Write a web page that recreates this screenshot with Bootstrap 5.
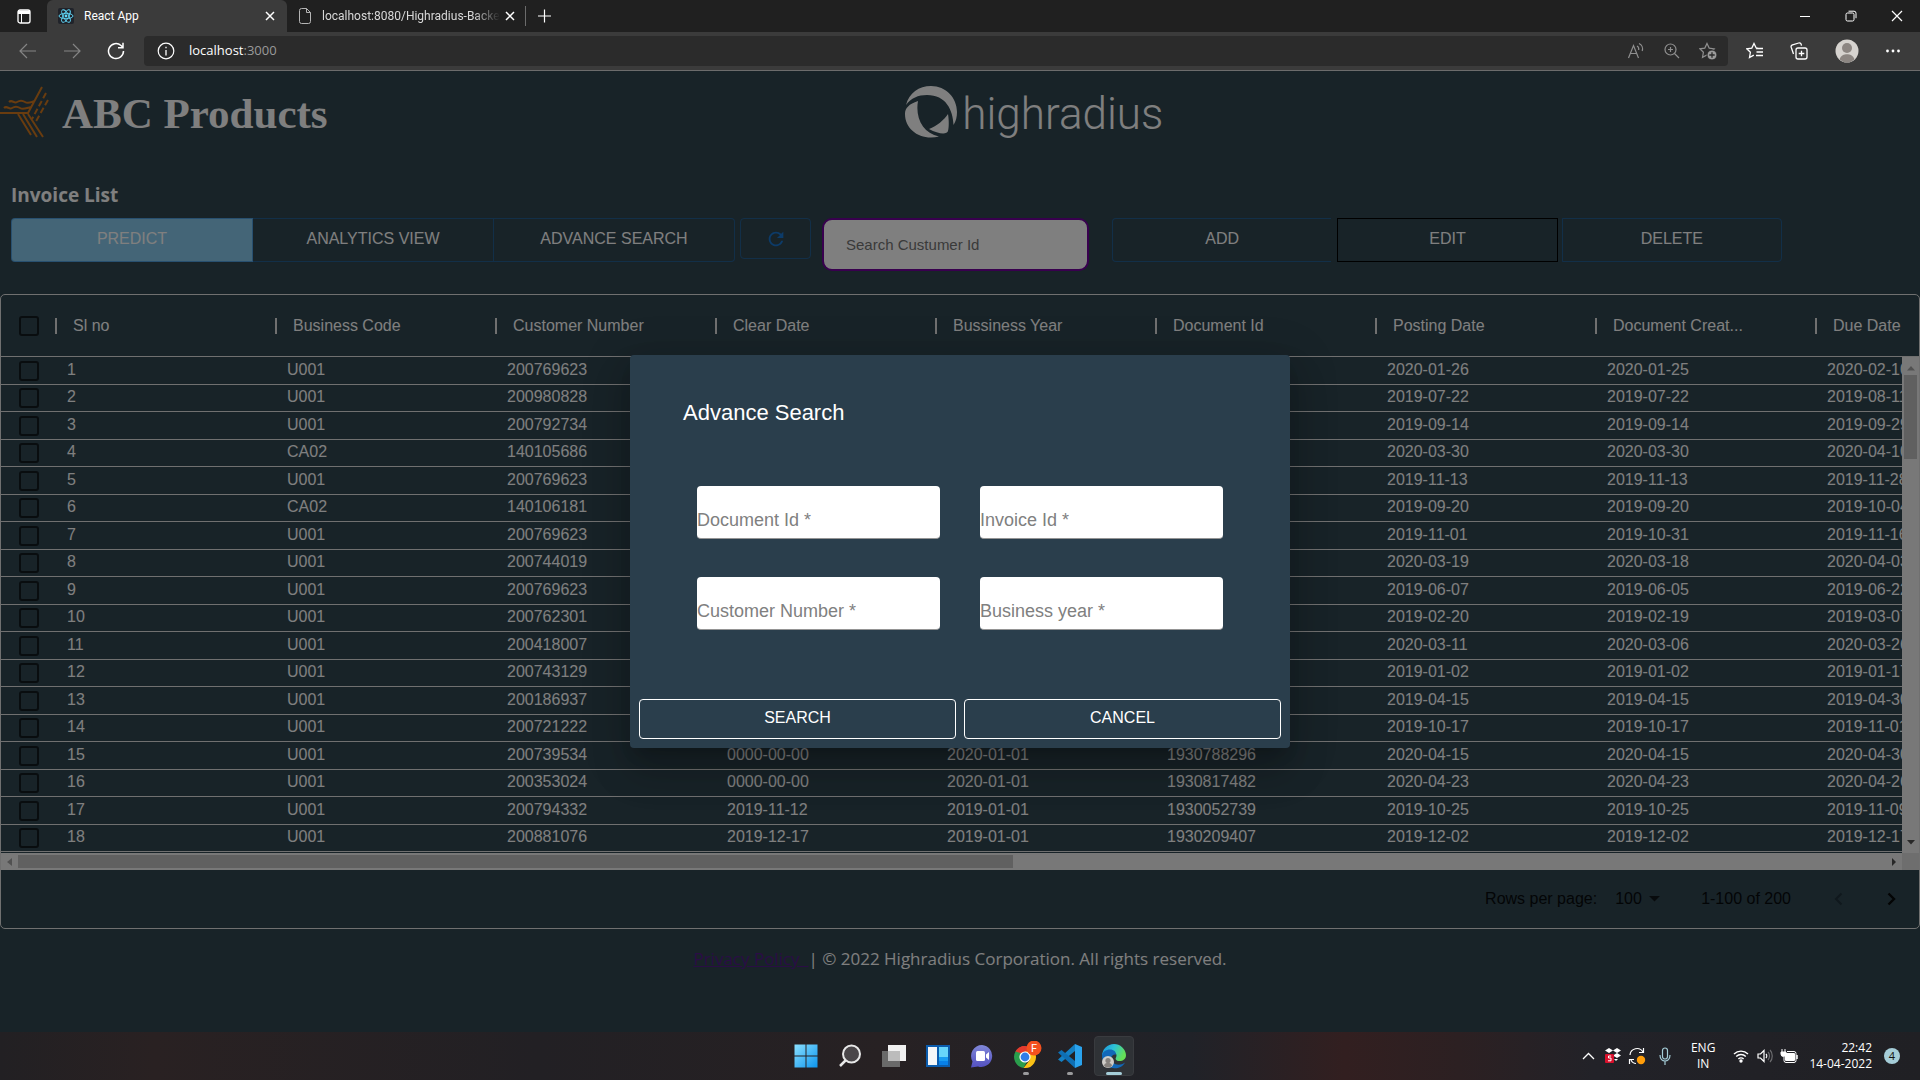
<!DOCTYPE html>
<html lang="en">
<head>
<meta charset="utf-8">
<meta name="viewport" content="width=device-width, initial-scale=1">
<title>React App</title>
<link href="https://cdn.jsdelivr.net/npm/bootstrap@5.3.0/dist/css/bootstrap.min.css" rel="stylesheet">
<style>
  :root { --page: #304650; --line: #e0e0e0; --ui: "Open Sans", "Noto Sans", sans-serif; --arial: "Liberation Sans", Arial, sans-serif; }
  body { height: 100vh; overflow: hidden; background: #202020; font-family: var(--ui); color: #fff; }
  svg { display: block; flex: none; }
  button { font-family: inherit; }
  .plain-btn { background: none; border: 0; padding: 0; color: inherit; display: flex; align-items: center; justify-content: center; }

  /* browser frame */
  .tab-strip { height: 32px; background: #202020; font: 12px/16px Roboto, sans-serif; }
  .tab-actions { width: 47px; padding-left: 1px; }
  .tab-item { height: 32px; }
  .tab-one { width: 240px; background: #3b3b3b; border-radius: 6px 6px 0 0; padding: 0 10px 0 11px; }
  .tab-two { width: 238px; padding: 0 8px 0 11px; }
  .tab-label { white-space: nowrap; margin-left: 10px; }
  .fade-label { -webkit-mask-image: linear-gradient(90deg, #000 85%, transparent); mask-image: linear-gradient(90deg, #000 85%, transparent); color: #d8d8d8; }
  .tab-rule { width: 1px; height: 20px; background: #6b6b6b; }
  .win-btn { width: 46px; height: 32px; }
  .nav-strip { height: 39px; background: #3b3b3b; border-bottom: 1px solid #6c6c6c; padding-bottom: 1px; }
  .nav-group { padding: 0 6px; }
  .nav-btn { width: 44px; height: 30px; }
  .address { height: 30px; background: #2b2b2b; border-radius: 4px; font-size: 13px; color: #9a9a9a; padding: 0 2px 0 13px; gap: 14px; }
  .side-btn { width: 46px; height: 30px; }
  .addr-btn { width: 36px; height: 30px; color: #8f8f8f; }

  /* page */
  .stage { background: var(--page); min-height: 0; }
  .brand-row { padding-top: 15px; height: 95px; }
  .brand-left { width: 47.15%; gap: 13px; }
  .brand-name { font: 700 43px/56px "Liberation Serif", "Times New Roman", serif; }
  .hr-name { font: 300 44px/56px Roboto, sans-serif; margin: 0; }
  .list-title { font: 700 19px/28px var(--ui); margin: 15px 0 9px 11px; }
  .tool-row { height: 76px; padding-left: 11px; padding-right: 138px; font-family: var(--arial); }
  .views { flex: 1 1 724px; margin-right: 5px; }
  .refresh-btn { flex: 1 1 71px; height: 41px; margin-right: 11px; color: #1976d2; border: 1px solid rgba(25,118,210,.5); border-radius: 4px; }
  .id-search { flex: 1 1 267px; min-width: 0; height: 53px; border: 2px solid #70009c; border-radius: 10px; background: #fff; padding: 0 22px; font-size: 15px; margin-right: 23px; }
  .id-search::placeholder { color: #757575; }
  .edits { flex: 1 1 670px; gap: 4px; }
  .tool-btn { flex: 1 1 0; height: 44px; border: 1px solid rgba(25,118,210,.5); background: none; color: #fff; font-size: 16px; line-height: 24px; padding: 0 0 2px; }
  .views .tool-btn + .tool-btn { border-left: 0; }
  .start-btn { border-radius: 4px 0 0 4px; }
  .end-btn { border-radius: 0 4px 4px 0; }
  .predict-btn { background: #88cbee; color: #fff; }
  .add-btn { border-right: 0; margin-right: 2px; }
  .edit-btn { border-color: #000; }

  /* data grid */
  .grid-box { border: 1px solid var(--line); border-radius: 5px; font-family: var(--arial); font-size: 16px; }
  .grid-view { height: 558px; overflow: hidden; }
  .grid-table { table-layout: fixed; width: 2035px; border-collapse: separate; border-spacing: 0; line-height: 20px; }
  .grid-table th { height: 62px; padding: 0 0 0 17px; font-weight: 400; border-bottom: 1px solid var(--line); position: relative; }
  .grid-table th + th::before { content: ""; position: absolute; left: -1px; top: 23px; width: 2px; height: 16px; background: var(--line); }
  .grid-table td { height: 27px; padding: 0 0 2px 11px; border-bottom: 1px solid var(--line); white-space: nowrap; }
  .grid-table tbody tr:nth-child(odd) td { height: 28px; }
  .grid-table .pick { width: 55px; padding: 0 0 0 18px; }
  .pick input { display: block; appearance: none; width: 20px; height: 20px; margin: 0; border: 2px solid #121a1e; border-radius: 3px; }
  .bar-y { position: absolute; right: 0; top: 62px; width: 17px; height: 496px; background: #f1f1f1; padding: 9px 2px 7px; }
  .bar-x { height: 17px; background: #f1f1f1; padding: 2px 0 2px 6px; }
  .thumb-y { width: 13px; height: 84px; background: #c1c1c1; margin-top: 4px; }
  .thumb-x { width: 52.5%; height: 13px; background: #c1c1c1; margin-left: 6px; }
  .bar-corner { width: 17px; height: 17px; background: #dcdcdc; }
  .pager { height: 58px; color: #070a0c; }
  .pager select { appearance: none; border: 0; background: none; color: inherit; font: inherit; padding: 0; width: 34px; margin-left: 18px; }
  .pager-btn { width: 54px; height: 40px; }
  .legal { font-size: 17px; line-height: 24px; margin-top: 18px; }
  .legal a { color: #551a8b; }

  /* dialog */
  .search-modal { --bs-modal-width: 660px; background: rgba(0,0,0,.5); font-family: var(--arial); z-index: 5; }
  .search-modal .modal-content { background: #2a3e4c; color: #fff; border: 0; border-radius: 4px; padding: 44px 9px 9px; box-shadow: 0 11px 15px -7px rgba(0,0,0,.2), 0 24px 38px 3px rgba(0,0,0,.14), 0 9px 46px 8px rgba(0,0,0,.12); }
  .modal-heading { font-size: 22px; line-height: 28px; font-weight: 400; margin: 0 0 59px 44px; }
  .field-grid { display: grid; grid-template-columns: 1fr 1fr; gap: 38px 40px; margin: 0 58px 69px; }
  .field-box { position: relative; height: 53px; }
  .field-box input { width: 100%; height: 53px; border: 0; border-bottom: 1px solid #949494; border-radius: 4px; background: #fff; padding: 20px 0 0; }
  .field-box label { position: absolute; left: 0; top: 22px; font-size: 18px; line-height: 24px; color: #808080; pointer-events: none; }
  .dialog-btn { flex: 1 1 0; height: 40px; border: 1px solid #fff; border-radius: 4px; background: none; color: #fff; font-size: 16px; line-height: 24px; padding: 0 0 3px; }

  /* taskbar */
  .task-row { height: 48px; background: linear-gradient(90deg, #222023 0, #292122 8%, #222024 28%, #272123 46%, #202228 62%, #321f20 70%, #2c2022 76%, #222228 83%, #202024 100%); font-size: 12px; line-height: 16px; }
  .task-side { flex: 1 1 0; padding-right: 16px; margin-right: 4px; }
  .task-btn { width: 44px; height: 48px; position: relative; }
  .task-btn.running::after { content: ""; position: absolute; bottom: 5px; width: 6px; height: 3px; border-radius: 2px; background: #9a9a9c; }
  .task-btn.current::before { content: ""; position: absolute; inset: 4px 2px; border-radius: 4px; background: #2f3236; border: 1px solid #393b3f; }
  .task-btn.current::after { width: 16px; background: #a5cdd8; }
  .task-btn svg { position: relative; }
  .note-count { width: 16px; height: 16px; border-radius: 50%; background: #a5cdd8; color: #111; font-size: 11px; }
  .tray-btn { width: 24px; height: 48px; }
  .input-lang { margin: 0 14px; }
</style>
</head>
<body class="d-flex flex-column">

<header>
  <div class="tab-strip d-flex align-items-center">
    <button class="plain-btn tab-actions" aria-label="Tab actions"><svg width="16" height="16" viewBox="0 0 16 16"><rect x="2" y="2" width="12" height="13" rx="2" fill="none" stroke="#fff" stroke-width="1.3"/><path d="M2 2.500h12v3.500H2z" fill="#fff"/><path d="M5.500 6v9" stroke="#fff"/></svg></button>
    <div class="tab-item tab-one d-flex align-items-center">
      <svg width="16" height="16" viewBox="0 0 16 16"><rect width="16" height="16" rx="2" fill="#20232a"/><g fill="none" stroke="#61dafb" stroke-width=".9"><ellipse cx="8" cy="8" rx="7" ry="2.7"/><ellipse cx="8" cy="8" rx="7" ry="2.7" transform="rotate(60 8 8)"/><ellipse cx="8" cy="8" rx="7" ry="2.7" transform="rotate(120 8 8)"/></g><circle cx="8" cy="8" r="1.4" fill="#61dafb"/></svg>
      <span class="tab-label flex-grow-1">React App</span>
      <button class="plain-btn" aria-label="Close tab"><svg width="14" height="14" viewBox="0 0 14 14"><path d="M3 3l8 8M11 3l-8 8" stroke="#fff" stroke-width="1.5"/></svg></button>
    </div>
    <div class="tab-item tab-two d-flex align-items-center">
      <svg width="14" height="16" viewBox="0 0 14 16"><path d="M1.5 2.500a2 2 0 0 1 2-2h5l4 4v9a2 2 0 0 1-2 2h-7a2 2 0 0 1-2-2zM8.500.5v4h4" fill="none" stroke="#b5b5b5"/></svg>
      <span class="tab-label fade-label">localhost:8080/Highradius-Backe</span>
      <button class="plain-btn ms-auto" aria-label="Close tab"><svg width="14" height="14" viewBox="0 0 14 14"><path d="M3 3l8 8M11 3l-8 8" stroke="#fff" stroke-width="1.5"/></svg></button>
    </div>
    <span class="tab-rule"></span>
    <button class="plain-btn ps-2 ms-1" aria-label="New tab"><svg width="14" height="16" viewBox="0 0 14 16"><path d="M0 8h13M6.500 1.500v13" stroke="#fff" stroke-width="1.2"/></svg></button>
    <div class="d-flex ms-auto">
      <button class="plain-btn win-btn" aria-label="Minimize"><svg width="10" height="10" viewBox="0 0 10 10"><path d="M0 5.500h10" stroke="#fff"/></svg></button>
      <button class="plain-btn win-btn" aria-label="Restore"><svg width="12" height="12" viewBox="0 0 12 12" fill="none" stroke="#fff"><rect x="1" y="3" width="8" height="8" rx="1.500"/><path d="M3.500 1.200H9a2 2 0 0 1 2 2v5"/></svg></button>
      <button class="plain-btn win-btn" aria-label="Close window"><svg width="12" height="12" viewBox="0 0 12 12"><path d="M1 1l10 10M11 1L1 11" stroke="#fff" stroke-width="1.200"/></svg></button>
    </div>
  </div>

  <div class="nav-strip d-flex align-items-center">
    <div class="nav-group d-flex">
      <button class="plain-btn nav-btn" aria-label="Back"><svg width="18" height="16" viewBox="0 0 18 16" fill="none" stroke="#858585" stroke-width="1.200"><path d="M17 8H1.500M8 1L1 8l7 7"/></svg></button>
      <button class="plain-btn nav-btn" aria-label="Forward"><svg width="18" height="16" viewBox="0 0 18 16" fill="none" stroke="#858585" stroke-width="1.200"><path d="M1 8h15.500M10 1l7 7-7 7"/></svg></button>
      <button class="plain-btn nav-btn" aria-label="Reload"><svg width="18" height="18" viewBox="0 0 18 18" fill="none" stroke="#fff" stroke-width="1.500"><path d="M16.500 9A7.500 7.500 0 1 1 14 3.500L16 5.500M16 .8v4.900h-5"/></svg></button>
    </div>
    <div class="address d-flex align-items-center flex-grow-1">
      <svg width="18" height="18" viewBox="0 0 18 18"><circle cx="9" cy="9" r="7.800" fill="none" stroke="#fff" stroke-width="1.200"/><path d="M9 8v5.500M9 4.800v1.500" stroke="#fff" stroke-width="1.300"/></svg>
      <span class="flex-grow-1"><span class="text-white">localhost</span>:3000</span>
      <div class="d-flex">
      <button class="plain-btn addr-btn" aria-label="Read aloud"><svg width="18" height="18" viewBox="0 0 18 18" fill="none" stroke="currentColor" stroke-width="1.200"><path d="M1.500 16L6.500 3.500 11.500 16M3.200 11.500h6.600M10 4c1.400.8 2 2.400 1.700 4M12 1.500c2.800 1.200 4.200 4.300 3.200 7.500"/></svg></button>
      <button class="plain-btn addr-btn" aria-label="Zoom"><svg width="16" height="16" viewBox="0 0 16 16" fill="none" stroke="currentColor" stroke-width="1.200"><circle cx="6.500" cy="6.500" r="5.500"/><path d="M10.500 10.500L15 15M4 6.500h5M6.500 4v5"/></svg></button>
      <button class="plain-btn addr-btn" aria-label="Add favorite"><svg width="18" height="18" viewBox="0 0 18 18"><path d="M8 1.500l2.200 4.600 5 .7-3.600 3.500.8 5L8 13l-4.500 2.300.9-5L.8 6.800l5-.7z" fill="none" stroke="currentColor" stroke-width="1.200"/><circle cx="13" cy="13" r="5" fill="#9b9b9b" stroke="#2b2b2b"/><path d="M13 10.300v5.400M10.300 13h5.400" stroke="#2b2b2b" stroke-width="1.300"/></svg></button>
      </div>
    </div>
    <div class="d-flex ps-1 me-1">
      <button class="plain-btn side-btn" aria-label="Favorites"><svg width="18" height="18" viewBox="0 0 18 18" fill="none" stroke="#fff" stroke-width="1.300"><path d="M12.500 6.500L10.200 6 8 1.500 5.800 6.100l-5 .7 3.600 3.500-.9 5.200 4.300-2.400M10 6.500h7M10.500 10h6.500M10 13.500h7"/></svg></button>
      <button class="plain-btn side-btn pe-1" aria-label="Collections"><svg width="18" height="18" viewBox="0 0 18 18" fill="none" stroke="#fff" stroke-width="1.300"><path d="M3.500 12L1.200 5.300a2 2 0 0 1 1.300-2.500L8.700 1a2 2 0 0 1 2.500 1.400l.3 1.300"/><rect x="6" y="6" width="11" height="11" rx="2"/><path d="M11.500 8.700v5.600M8.700 11.500h5.600"/></svg></button>
      <button class="plain-btn side-btn" aria-label="Profile"><svg width="24" height="24" viewBox="0 0 24 24"><circle cx="12" cy="12" r="11.500" fill="#d6d3cf"/><circle cx="12" cy="9" r="5" fill="#8c8682"/><path d="M4.500 20.500C6 16 9 15.200 12 15.200s6 .8 7.500 5.300A11.300 11.300 0 0 1 12 23.500a11.300 11.300 0 0 1-7.500-3z" fill="#8c8682"/></svg></button>
      <button class="plain-btn side-btn" aria-label="Menu"><svg width="16" height="4" viewBox="0 0 16 4" fill="#fff"><circle cx="2.500" cy="2" r="1.400"/><circle cx="8" cy="2" r="1.400"/><circle cx="13.500" cy="2" r="1.400"/></svg></button>
    </div>
  </div>
</header>

<main class="stage position-relative flex-grow-1">
  <div class="brand-row d-flex align-items-start">
    <div class="brand-left d-flex">
      <svg width="49" height="52" viewBox="0 0 49 52" fill="none" stroke="#d2781e" stroke-width="2"><path d="M42 1L28 27H0M9 16c3-3 5 2 8 0s5-2 8 0 6 0 10-1M4 22c3-3 5 2 8 0s5-2 8 0 6 0 11-1M18 28l13 21M23 28l14 23M28 28l15 23"/><path d="M46 7L32 33M48 14L35 37" stroke-dasharray="6 3"/></svg>
      <h1 class="brand-name m-0">ABC Products</h1>
    </div>
    <svg class="me-1" width="53" height="52" viewBox="0 0 53 52" fill="#fff"><path d="M1 19C4 7 14 0 26 0c15 0 26 12 26 26 0 5-1 9-3.500 13C48 24 41 9 22 9 13 9 6 12 1 19z"/><path d="M13 15C10 32 18 47 34 50.500 16 55 0 44 0 28c0-6 4-10 13-13z"/><path d="M43 28c1 6 1 13 0 17-1 4-10 3-19-2 8-3 15-9 19-15z"/></svg>
    <p class="hr-name">highradius</p>
  </div>

  <h2 class="list-title">Invoice List</h2>

  <div class="tool-row d-flex align-items-start">
    <div class="views d-flex">
      <button class="tool-btn start-btn predict-btn">PREDICT</button>
      <button class="tool-btn">ANALYTICS VIEW</button>
      <button class="tool-btn end-btn">ADVANCE SEARCH</button>
    </div>
    <button class="plain-btn refresh-btn" aria-label="Refresh"><svg width="22" height="22" viewBox="0 0 24 24" fill="currentColor"><path d="M17.650 6.350C16.200 4.900 14.210 4 12 4c-4.420 0-7.990 3.580-7.990 8s3.570 8 7.990 8c3.730 0 6.840-2.550 7.730-6h-2.080c-.82 2.330-3.040 4-5.650 4-3.310 0-6-2.690-6-6s2.690-6 6-6c1.660 0 3.140.69 4.220 1.780L13 11h7V4l-2.350 2.350z"/></svg></button>
    <input class="id-search" type="text" placeholder="Search Custumer Id" aria-label="Search Custumer Id">
    <div class="edits d-flex">
      <button class="tool-btn start-btn add-btn">ADD</button>
      <button class="tool-btn edit-btn">EDIT</button>
      <button class="tool-btn end-btn">DELETE</button>
    </div>
  </div>

  <section class="grid-box">
    <div class="grid-view position-relative">
      <table class="grid-table">
        <thead>
          <tr>
            <th class="pick"><input type="checkbox" aria-label="Select all rows"></th>
            <th>Sl no</th><th>Business Code</th><th>Customer Number</th><th>Clear Date</th><th>Bussiness Year</th><th>Document Id</th><th>Posting Date</th><th>Document Creat...</th><th>Due Date</th>
          </tr>
        </thead>
        <tbody id="invoiceRows"></tbody>
      </table>
      <div class="bar-y">
        <svg width="13" height="5" viewBox="0 0 13 5"><path d="M3 4.500h8L7 0z" fill="#a3a3a3"/></svg>
        <div class="thumb-y mt-1"></div>
        <svg class="position-absolute bottom-0 mb-2" width="13" height="5" viewBox="0 0 13 5"><path d="M3 0h8L7 4.500z" fill="#505050"/></svg>
      </div>
    </div>
    <div class="d-flex">
      <div class="bar-x d-flex align-items-center flex-grow-1">
        <svg width="5" height="8" viewBox="0 0 5 8"><path d="M5 0v8L0 4z" fill="#a3a3a3"/></svg>
        <div class="thumb-x"></div>
        <svg class="ms-auto me-1" width="8" height="8" viewBox="0 0 8 8"><path d="M2 0v8l4-4z" fill="#505050"/></svg>
      </div>
      <div class="bar-corner"></div>
    </div>
    <div class="pager d-flex align-items-center justify-content-end">
      <label for="pageSize">Rows per page:</label>
      <select id="pageSize"><option>100</option></select>
      <svg class="me-4" width="12" height="6" viewBox="0 0 12 6"><path d="M0 0h11L5.500 5.500z" fill="#10171b"/></svg>
      <span class="ms-3 me-3 pe-1">1-100 of 200</span>
      <button class="plain-btn pager-btn" aria-label="Previous page"><svg width="10" height="14" viewBox="0 0 10 14"><path d="M8.500 1.500L3 7l5.500 5.500" fill="none" stroke="#20303a" stroke-width="2"/></svg></button>
      <button class="plain-btn pager-btn" aria-label="Next page"><svg width="10" height="14" viewBox="0 0 10 14"><path d="M1.500 1.500L7 7l-5.500 5.500" fill="none" stroke="#060809" stroke-width="2.400"/></svg></button>
    </div>
  </section>

  <footer class="legal text-center"><a href="#">Privacy Policy&nbsp; </a>| © 2022 Highradius Corporation. All rights reserved.</footer>

  <div class="modal search-modal d-block position-absolute" role="dialog" aria-labelledby="searchTitle">
    <div class="modal-dialog modal-dialog-centered">
      <form class="modal-content">
        <h2 class="modal-heading" id="searchTitle">Advance Search</h2>
        <div class="field-grid">
          <div class="field-box"><input id="docId" type="text"><label for="docId">Document Id *</label></div>
          <div class="field-box"><input id="invId" type="text"><label for="invId">Invoice Id *</label></div>
          <div class="field-box"><input id="custNo" type="text"><label for="custNo">Customer Number *</label></div>
          <div class="field-box"><input id="bizYear" type="text"><label for="bizYear">Business year *</label></div>
        </div>
        <div class="d-flex gap-2">
          <button type="button" class="dialog-btn">SEARCH</button>
          <button type="button" class="dialog-btn">CANCEL</button>
        </div>
      </form>
    </div>
  </div>
</main>

<nav class="task-row d-flex align-items-center" aria-label="Taskbar">
  <div class="task-side"></div>
  <div class="d-flex">
    <button class="plain-btn task-btn" aria-label="Start"><svg width="24" height="24" viewBox="0 0 24 24"><defs><linearGradient id="win" x1="0" y1="0" x2="1" y2="1"><stop stop-color="#8be0ff"/><stop offset="1" stop-color="#0c94ec"/></linearGradient></defs><path d="M.5.5h11v11H.5zM12.500.5h11v11h-11zM.5 12.500h11v11H.5zM12.500 12.500h11v11h-11z" fill="url(#win)"/></svg></button>
    <button class="plain-btn task-btn" aria-label="Search"><svg width="24" height="24" viewBox="0 0 24 24"><circle cx="13.500" cy="10" r="8.500" fill="#4a4649" stroke="#e8e8e8" stroke-width="2"/><path d="M7.500 16.500L2 22" stroke="#e8e8e8" stroke-width="2.500"/></svg></button>
    <button class="plain-btn task-btn" aria-label="Task view"><svg width="26" height="24" viewBox="0 0 26 24"><path d="M7 1h18v16H7z" fill="#f1f1f1"/><path d="M1 7h18v16H1z" fill="#6a6a6a"/><path d="M7 7h12v10H7z" fill="#bcbcbc"/></svg></button>
    <button class="plain-btn task-btn" aria-label="Widgets"><svg width="24" height="24" viewBox="0 0 24 24"><path d="M0 1h24v22H0z" fill="#0b5cad"/><path d="M2 3h9v18H2z" fill="#f4f6f8"/><path d="M13 3h9v10h-9z" fill="#68d5fb"/><path d="M13 13h9v4h-9z" fill="#199cf2"/><path d="M13 17h9v4h-9z" fill="#0880e8"/></svg></button>
    <button class="plain-btn task-btn" aria-label="Chat"><svg width="24" height="24" viewBox="0 0 24 24"><defs><linearGradient id="chat" x1="0" y1="0" x2="0" y2="1"><stop stop-color="#8087d8"/><stop offset="1" stop-color="#5350c0"/></linearGradient></defs><path d="M12 1a11 11 0 1 1-4 21.500L1 23.500l1.500-6A11 11 0 0 1 12 1z" fill="url(#chat)"/><rect x="6" y="7" width="9" height="10" rx="1.500" fill="#fff"/><path d="M16 10.500L19 8v8l-3-2.500z" fill="#fff"/></svg></button>
    <button class="plain-btn task-btn running" aria-label="Chrome"><svg width="32" height="30" viewBox="0 0 32 30"><path d="M15 16L5.500 10.500A11 11 0 0 1 24.500 10.500z" fill="#e33b2e"/><path d="M15 16h0L9.800 7 5.500 10.500A11 11 0 0 0 13.500 26.900L18.500 18z" fill="#2a9d4c"/><path d="M5.500 10.500A11 11 0 0 1 15 5l-1 8z" fill="#e33b2e"/><path d="M15 16l5 2.800-6.500 8.100A11 11 0 0 0 24.500 10.500H15z" fill="#fbc116"/><circle cx="15" cy="16" r="5.600" fill="#fff"/><circle cx="15" cy="16" r="4.400" fill="#2f7de9"/><circle cx="24" cy="7" r="7.500" fill="#f4511e"/><text x="24" y="11" font-family="Roboto, sans-serif" font-size="11" text-anchor="middle" fill="#fff">F</text></svg></button>
    <button class="plain-btn task-btn running" aria-label="Code editor"><svg width="26" height="26" viewBox="0 0 26 26"><path d="M18 1v7L4.500 19 1 16.500 18 1z" fill="#1480c4"/><path d="M1 9.500L4.500 7 18 18v7z" fill="#0e6fb4"/><path d="M18 1l7 3v18l-7 3z" fill="#2aa3ee"/></svg></button>
    <button class="plain-btn task-btn running current" aria-label="Edge"><svg width="26" height="26" viewBox="0 0 26 26"><defs><linearGradient id="edge1" x1="0" y1="0" x2="1" y2=".4"><stop stop-color="#1d8fdc"/><stop offset=".5" stop-color="#2cc3d6"/><stop offset="1" stop-color="#65df56"/></linearGradient></defs><path d="M13 1a12 12 0 0 1 12 11c0 4-3 6-6.500 6S14 16 15 14.500 16 9 11 9 1 12 1 13A12 12 0 0 1 13 1z" fill="url(#edge1)"/><path d="M1 13c0-4 4-6.500 8-6.500 4 0 6 2.500 6 5-5-1-6 5-3 8s8 3 12 0c-3 6-9 6-12 5.500A12 12 0 0 1 1 13z" fill="#1268b8"/><circle cx="7" cy="19" r="6" fill="#cfccc8"/><circle cx="7" cy="17.500" r="2.600" fill="#86817d"/><path d="M3 23c.5-3 2-3 4-3s3.500 0 4 3a6 6 0 0 1-8 0z" fill="#86817d"/></svg></button>
  </div>
  <div class="task-side d-flex justify-content-end align-items-center">
    <button class="plain-btn tray-btn" aria-label="Hidden icons"><svg width="13" height="8" viewBox="0 0 13 8"><path d="M1 7l5.500-5.500L12 7" fill="none" stroke="#fff" stroke-width="1.300"/></svg></button>
    <button class="plain-btn tray-btn" aria-label="Dropbox"><svg width="16" height="16" viewBox="0 0 16 16"><path d="M4 0l4 2.500L4 5 0 2.500zM12 0l4 2.500L12 5 8 2.500zM12 5l4 2.500-4 2.500-4-2.500z" fill="#fff"/><path d="M9 11h4l-2 2z" fill="#fff"/><rect y="6" width="9" height="9" rx="1" fill="#d9102c"/><path d="M6.200 8H3.500v2h2.500v2.800H3" fill="none" stroke="#fff"/></svg></button>
    <button class="plain-btn tray-btn" aria-label="Updates"><svg width="18" height="18" viewBox="0 0 18 18"><path d="M2 8A7 7 0 0 1 15 5M15.500 1v4.500H11M1.500 12v5M2 12.500h4M3 13c1 2 3 3.500 5 3.500" fill="none" stroke="#fff" stroke-width="1.200"/><circle cx="13" cy="13" r="4.200" fill="#ff9d0a"/></svg></button>
    <button class="plain-btn tray-btn ms-1" aria-label="Microphone"><svg width="12" height="18" viewBox="0 0 12 18" fill="none" stroke="#a5cdd8" stroke-width="1.200"><rect x="3.500" y="1" width="5" height="11" rx="2.500"/><path d="M1 8c0 8 10 8 10 0M6 14v4"/></svg></button>
    <span class="input-lang text-center">ENG<br>IN</span>
    <button class="plain-btn tray-btn" aria-label="Network"><svg width="16" height="14" viewBox="0 0 16 14" fill="none" stroke="#fff" stroke-width="1.400"><path d="M1 5a10 10 0 0 1 14 0M3.200 7.500a6.800 6.800 0 0 1 9.600 0M5.400 10a3.700 3.700 0 0 1 5.200 0"/><circle cx="8" cy="12" r="1" fill="#fff"/></svg></button>
    <button class="plain-btn tray-btn" aria-label="Volume"><svg width="16" height="14" viewBox="0 0 16 14" fill="none" stroke="#fff" stroke-width="1.200"><path d="M1 5h2.500L7 1.500v11L3.500 9H1zM9 5c1 1 1 3 0 4"/><path d="M11 3c2 2 2 6 0 8M13 1c3 3 3 9 0 12" stroke="#6d6d70"/></svg></button>
    <button class="plain-btn tray-btn" aria-label="Battery"><svg width="18" height="14" viewBox="0 0 18 14"><rect x="5" y="4" width="10" height="8" rx="1" fill="#fff"/><path d="M7 2.500h7a2 2 0 0 1 2 2v7a2 2 0 0 1-2 2H6a2 2 0 0 1-2-2V8" fill="none" stroke="#fff"/><path d="M17 6v4" stroke="#fff" stroke-width="1.500"/><path d="M1 3h5v2a2.500 2.500 0 0 1-5 0zM2 0v3M5 0v3" fill="#fff" stroke="#fff"/></svg></button>
    <span class="text-end ms-2 me-2">22:42<br>14-04-2022</span>
    <span class="note-count d-flex align-items-center justify-content-center ms-1">4</span>
  </div>
</nav>

<script src="https://cdn.jsdelivr.net/npm/bootstrap@5.3.0/dist/js/bootstrap.bundle.min.js"></script>
<script>
  // business code, customer, clear date, year, document id, posting, created, due
  const invoices = [
    ["U001","200769623","","","","2020-01-26","2020-01-25","2020-02-10"],
    ["U001","200980828","","","","2019-07-22","2019-07-22","2019-08-11"],
    ["U001","200792734","","","","2019-09-14","2019-09-14","2019-09-29"],
    ["CA02","140105686","","","","2020-03-30","2020-03-30","2020-04-10"],
    ["U001","200769623","","","","2019-11-13","2019-11-13","2019-11-28"],
    ["CA02","140106181","","","","2019-09-20","2019-09-20","2019-10-04"],
    ["U001","200769623","","","","2019-11-01","2019-10-31","2019-11-16"],
    ["U001","200744019","","","","2020-03-19","2020-03-18","2020-04-03"],
    ["U001","200769623","","","","2019-06-07","2019-06-05","2019-06-22"],
    ["U001","200762301","","","","2019-02-20","2019-02-19","2019-03-07"],
    ["U001","200418007","","","","2020-03-11","2020-03-06","2020-03-26"],
    ["U001","200743129","","","","2019-01-02","2019-01-02","2019-01-17"],
    ["U001","200186937","","","","2019-04-15","2019-04-15","2019-04-30"],
    ["U001","200721222","","","","2019-10-17","2019-10-17","2019-11-01"],
    ["U001","200739534","0000-00-00","2020-01-01","1930788296","2020-04-15","2020-04-15","2020-04-30"],
    ["U001","200353024","0000-00-00","2020-01-01","1930817482","2020-04-23","2020-04-23","2020-04-26"],
    ["U001","200794332","2019-11-12","2019-01-01","1930052739","2019-10-25","2019-10-25","2019-11-09"],
    ["U001","200881076","2019-12-17","2019-01-01","1930209407","2019-12-02","2019-12-02","2019-12-17"]
  ];
  document.getElementById("invoiceRows").innerHTML = invoices.map((row, i) =>
    `<tr><td class="pick"><input type="checkbox" aria-label="Select row ${i + 1}"></td><td>${i + 1}</td>${row.map(v => `<td>${v}</td>`).join("")}</tr>`
  ).join("");
</script>
</body>
</html>
